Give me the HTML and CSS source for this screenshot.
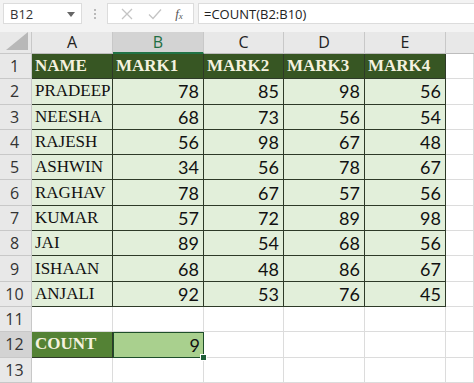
FILE: index.html
```html
<!DOCTYPE html>
<html>
<head>
<meta charset="utf-8">
<link rel="stylesheet" href="styles.css">
</head>
<body>
<div class="app">
  <div class="fbar">
    <div class="namebox"><span>B12</span><svg class="caret" width="8" height="5" viewBox="0 0 8 5"><path d="M0 0h8L4 5z" fill="#666"/></svg></div>
    <div class="grip"><i></i><i></i><i></i></div>
    <div class="btns">
      <svg width="14" height="14" viewBox="0 0 14 14"><path d="M2 2l10 10M12 2L2 12" stroke="#c4c4c4" stroke-width="1.3"/></svg>
      <svg width="16" height="14" viewBox="0 0 16 14"><path d="M2 7.5l4 4 8-9" stroke="#c4c4c4" stroke-width="1.3" fill="none"/></svg>
      <span class="fx">f<sub>x</sub></span>
    </div>
    <div class="formula">=COUNT(B2:B10)</div>
  </div>
  <div class="sheet">
    <div class="corner"><svg width="22" height="18" viewBox="0 0 22 18"><path d="M22 0V18H0z" fill="#b8b8b8"/></svg></div>
    <div class="ch">A</div><div class="ch sel">B</div><div class="ch">C</div><div class="ch">D</div><div class="ch">E</div><div class="ch last"></div>

    <div class="rh">1</div><div class="c th">NAME</div><div class="c th">MARK1</div><div class="c th">MARK2</div><div class="c th">MARK3</div><div class="c th">MARK4</div><div class="g"></div>

    <div class="rh">2</div><div class="c nm">PRADEEP</div><div class="c n">78</div><div class="c n">85</div><div class="c n">98</div><div class="c n">56</div><div class="g"></div>
    <div class="rh">3</div><div class="c nm">NEESHA</div><div class="c n">68</div><div class="c n">73</div><div class="c n">56</div><div class="c n">54</div><div class="g"></div>
    <div class="rh">4</div><div class="c nm">RAJESH</div><div class="c n">56</div><div class="c n">98</div><div class="c n">67</div><div class="c n">48</div><div class="g"></div>
    <div class="rh">5</div><div class="c nm">ASHWIN</div><div class="c n">34</div><div class="c n">56</div><div class="c n">78</div><div class="c n">67</div><div class="g"></div>
    <div class="rh">6</div><div class="c nm">RAGHAV</div><div class="c n">78</div><div class="c n">67</div><div class="c n">57</div><div class="c n">56</div><div class="g"></div>
    <div class="rh">7</div><div class="c nm">KUMAR</div><div class="c n">57</div><div class="c n">72</div><div class="c n">89</div><div class="c n">98</div><div class="g"></div>
    <div class="rh">8</div><div class="c nm">JAI</div><div class="c n">89</div><div class="c n">54</div><div class="c n">68</div><div class="c n">56</div><div class="g"></div>
    <div class="rh">9</div><div class="c nm">ISHAAN</div><div class="c n">68</div><div class="c n">48</div><div class="c n">86</div><div class="c n">67</div><div class="g"></div>
    <div class="rh">10</div><div class="c nm">ANJALI</div><div class="c n">92</div><div class="c n">53</div><div class="c n">76</div><div class="c n">45</div><div class="g"></div>

    <div class="rh">11</div><div class="g"></div><div class="g"></div><div class="g"></div><div class="g"></div><div class="g"></div><div class="g"></div>
    <div class="rh selr">12</div><div class="c cnt">COUNT</div><div class="c res">9<span class="handle"></span></div><div class="g"></div><div class="g"></div><div class="g"></div><div class="g"></div>
    <div class="rh">13</div><div class="g"></div><div class="g"></div><div class="g"></div><div class="g"></div><div class="g"></div><div class="g"></div>
  </div>
</div>
</body>
</html>
```

FILE: styles.css
```css
html, body { margin: 0; padding: 0; background: #fff; }
body { width: 474px; height: 383px; overflow: hidden; }
.app { width: 474px; height: 383px; background: #f3f3f3; display: flex; flex-direction: column; }

.fbar { height: 32px; display: flex; align-items: flex-start; padding-top: 3px; box-sizing: border-box; font-family: "Open Sans", sans-serif; }
.namebox { margin-left: 3px; width: 79px; height: 21px; box-sizing: border-box; background: #fff; border: 1px solid #dcdcdc; display: flex; align-items: center; justify-content: space-between; padding: 0 6px 0 6px; font-size: 13px; color: #333; }
.caret { margin-top: 1px; }
.grip { width: 25px; height: 21px; display: flex; flex-direction: column; align-items: center; justify-content: center; gap: 2px; }
.grip i { width: 2px; height: 2px; background: #b9b9b9; display: block; }
.btns { width: 87px; height: 21px; box-sizing: border-box; background: #fff; border: 1px solid #dcdcdc; display: flex; align-items: center; justify-content: space-around; padding: 0 4px 0 6px; }
.fx { font-family: "Liberation Serif", serif; font-style: italic; font-size: 13px; color: #555; }
.fx sub { font-size: 9px; vertical-align: -1px; }
.formula { margin-left: 4px; flex: 1; height: 21px; box-sizing: border-box; background: #fff; border: 1px solid #dcdcdc; border-right: 0; font-size: 13px; color: #222; display: flex; align-items: center; padding-left: 5px; }

.sheet { flex: 1; display: grid; grid-template-columns: 32px 81px 91px 80px 81px 81px 1fr; grid-template-rows: 22px repeat(13, 25.3px); background: #fff; }
.sheet > div { box-sizing: border-box; }
.corner { background: #e8e8e8; border-right: 1px solid #c8c8c8; border-bottom: 1px solid #c8c8c8; display: flex; align-items: flex-end; justify-content: flex-end; padding: 0 3px 3px 0; }
.ch { background: #e8e8e8; border-right: 1px solid #c8c8c8; border-bottom: 1px solid #bdbdbd; font-family: "Open Sans", sans-serif; font-size: 16px; color: #222; text-align: center; line-height: 21px; }
.ch.sel { background: #d3d3d3; color: #1f6e43; border-bottom: 2px solid #217346; }
.ch.last { border-right: 0; }
.rh { background: #e8e8e8; border-right: 1px solid #c8c8c8; border-bottom: 1px solid #c8c8c8; font-family: "Open Sans", sans-serif; font-size: 16px; color: #333; display: flex; align-items: center; justify-content: center; padding-right: 2px; }
.rh.selr { background: #d3d3d3; color: #333; }
.g { border-right: 1px solid #dcdcdc; border-bottom: 1px solid #dcdcdc; }

.c { border-right: 1px solid #2e3a28; border-bottom: 1px solid #2e3a28; display: flex; align-items: center; white-space: nowrap; overflow: hidden; }
.th { background: #375623; color: #f4f1df; font-family: "Liberation Serif", serif; font-weight: bold; font-size: 17px; padding-left: 3px; }
.nm { background: #e2efda; color: #111; font-family: "Liberation Serif", serif; font-size: 17px; padding-left: 3px; }
.n { background: #e2efda; color: #111; font-family: "Lato", sans-serif; font-size: 18px; justify-content: flex-end; padding-right: 4px; }
.cnt { background: #548235; color: #f4f1df; font-family: "Liberation Serif", serif; font-weight: bold; font-size: 17px; padding-left: 3px; }
.res { position: relative; overflow: visible; background: #a9d08e; border: 1px solid #1e4e2a; color: #111; font-family: "Lato", sans-serif; font-size: 18px; justify-content: flex-end; padding-right: 3px; }
.handle { position: absolute; right: -4px; bottom: -4px; width: 5px; height: 5px; background: #1e5e38; border: 1px solid #fff; }
```
